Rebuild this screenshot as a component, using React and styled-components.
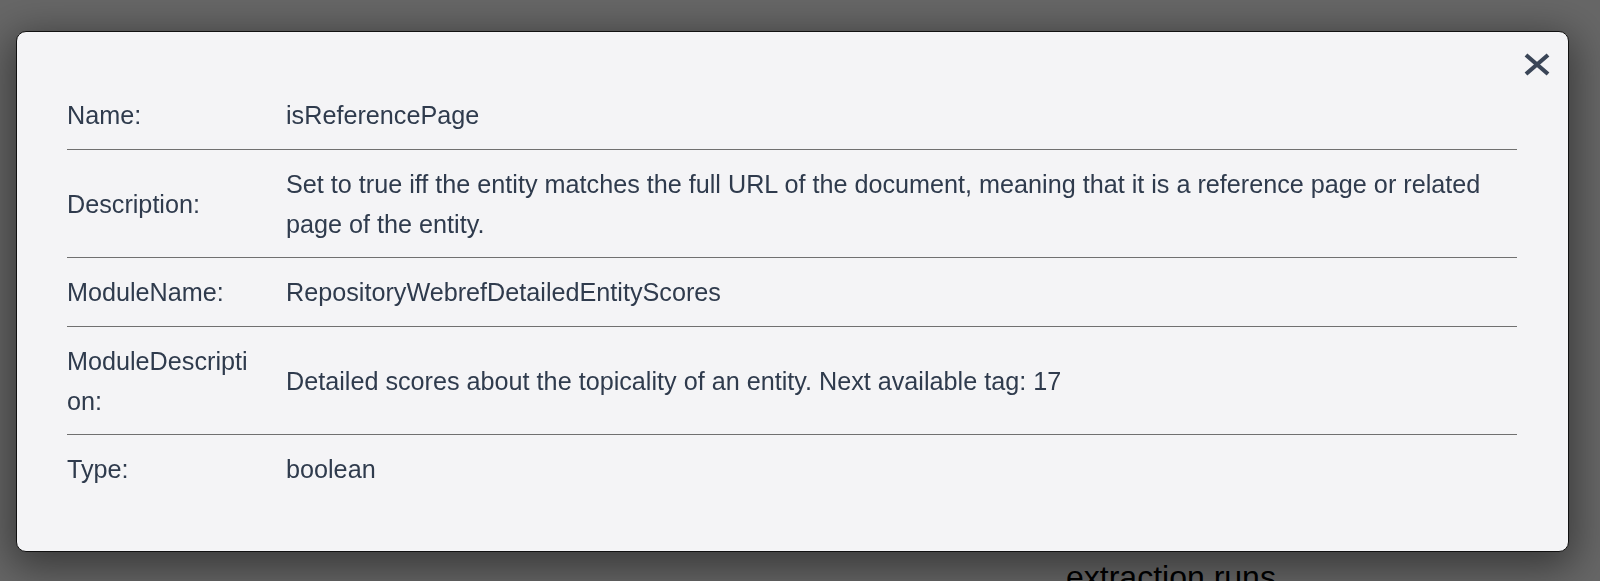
import React from 'react'
import styled, { createGlobalStyle } from 'styled-components'

const GlobalStyle = createGlobalStyle`
  html, body {
    margin: 0;
    padding: 0;
    background: #ffffff;
    font-family: 'Liberation Sans', Arial, Helvetica, sans-serif;
  }
  * {
    box-sizing: border-box;
  }
`

const fields = [
  { label: 'Name:', value: 'isReferencePage' },
  {
    label: 'Description:',
    value:
      'Set to true iff the entity matches the full URL of the document, meaning that it is a reference page or related page of the entity.',
  },
  { label: 'ModuleName:', value: 'RepositoryWebrefDetailedEntityScores' },
  {
    label: 'ModuleDescription:',
    value: 'Detailed scores about the topicality of an entity. Next available tag: 17',
  },
  { label: 'Type:', value: 'boolean' },
]

const CloseIcon = () => (
  <svg width='26' height='23' viewBox='0 0 26 23' aria-hidden='true'>
    <path
      d='M2 2 L24 21 M24 2 L2 21'
      stroke='currentColor'
      strokeWidth='4.2'
      strokeLinecap='butt'
      fill='none'
    />
  </svg>
)

const App = () => {
  return (
    <>
      <GlobalStyle />
      <Page>
        <PageText>extraction runs</PageText>
      </Page>
      <Overlay>
        <Modal role='dialog'>
          <CloseButton aria-label='Close'>
            <CloseIcon />
          </CloseButton>
          <FieldTable>
            {fields.map((f, i) => (
              <FieldRow key={f.label} last={i === fields.length - 1}>
                <FieldLabel>{f.label}</FieldLabel>
                <FieldValue>{f.value}</FieldValue>
              </FieldRow>
            ))}
          </FieldTable>
        </Modal>
      </Overlay>
    </>
  )
}

const Page = styled.div`
  min-height: 581px;
  padding: 559px 0 0 1066px;
  background: #ffffff;
`

const PageText = styled.p`
  margin: 0;
  font-size: 32px;
  color: #000000;
  white-space: nowrap;
`

const Overlay = styled.div`
  position: fixed;
  inset: 0;
  background: rgba(0, 0, 0, 0.6);
  padding: 31px 31px 0 16px;
`

const Modal = styled.div`
  position: relative;
  background: #f4f4f6;
  border: 1px solid #111111;
  border-radius: 10px;
  padding: 49px 51px 48px 50px;
  box-shadow: 0 10px 40px 6px rgba(0, 0, 0, 0.45);
  color: #2f3b4d;
`

const CloseButton = styled.button`
  position: absolute;
  top: 21px;
  right: 18px;
  display: flex;
  align-items: center;
  justify-content: center;
  padding: 0;
  border: none;
  background: transparent;
  color: #3a4557;
  cursor: pointer;
`

const FieldTable = styled.div`
  display: flex;
  flex-direction: column;
`

const FieldRow = styled.div`
  display: grid;
  grid-template-columns: 219px 1fr;
  align-items: center;
  padding: 14px 0 13.5px;
  border-bottom: ${p => (p.last ? 'none' : '1px solid #707070')};
  font-size: 25.2px;
  line-height: 40px;
`

const FieldLabel = styled.div`
  padding-right: 32px;
  word-break: break-all;
`

const FieldValue = styled.div`
  padding-right: 20px;
`

export default App
